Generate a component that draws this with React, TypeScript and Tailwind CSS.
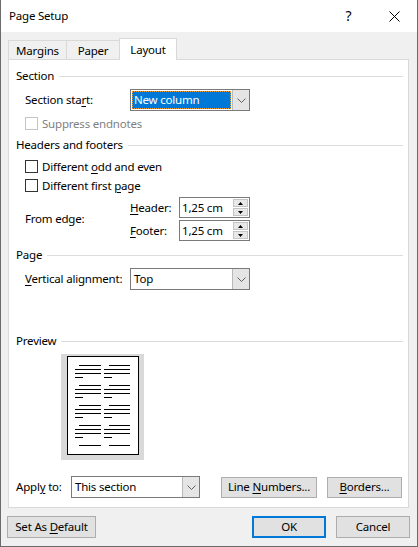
import React from "react"

function Key({ children }: { children: React.ReactNode }) {
  return <span className="underline decoration-1 underline-offset-[2px]">{children}</span>
}

function GroupHeader({ label, className = "" }: { label: string; className?: string }) {
  return (
    <div className={`flex h-[16px] items-center pl-[7px] pr-[5px] ${className}`}>
      <span className="whitespace-nowrap">{label}</span>
      <div className="ml-[5px] h-px flex-1 bg-[#dcdcdc]" />
    </div>
  )
}

function Chevron() {
  return (
    <svg width="9" height="5" viewBox="0 0 9 5">
      <path d="M0.5 0.5 L4.5 4.5 L8.5 0.5" fill="none" stroke="#606060" strokeWidth="1" />
    </svg>
  )
}

function Combo({
  value,
  className,
  selected = false,
}: {
  value: string
  className: string
  selected?: boolean
}) {
  return (
    <div className={`flex h-[22px] border border-[#7a7a7a] bg-white ${className}`}>
      {selected ? (
        <div className="flex-1 p-px">
          <div className="flex h-full items-center border border-dotted border-[#f0a040] bg-[#0078d7] pl-px text-white">
            {value}
          </div>
        </div>
      ) : (
        <div className="flex flex-1 items-center pl-[3px]">{value}</div>
      )}
      <div className="flex w-[17px] items-center justify-center border-l border-[#b9b9b9] bg-[#e5e5e5]">
        <Chevron />
      </div>
    </div>
  )
}

function Spinner({ value }: { value: string }) {
  return (
    <div className="flex h-[21px] w-[71px] border border-[#7a7a7a] bg-white">
      <div className="flex flex-1 items-center pl-[2px]">{value}</div>
      <div className="my-px mr-px flex w-[15px] flex-col gap-px">
        <div className="flex flex-1 items-center justify-center border border-[#c4c4c4] bg-[#e8e8e8]">
          <svg width="5" height="3" viewBox="0 0 5 3">
            <path d="M2.5 0 L5 3 L0 3 Z" fill="#000" />
          </svg>
        </div>
        <div className="flex flex-1 items-center justify-center border border-[#c4c4c4] bg-[#e8e8e8]">
          <svg width="5" height="3" viewBox="0 0 5 3">
            <path d="M0 0 L5 0 L2.5 3 Z" fill="#000" />
          </svg>
        </div>
      </div>
    </div>
  )
}

function Check({ children, disabled = false }: { children: React.ReactNode; disabled?: boolean }) {
  return (
    <div className="flex h-[13px] items-center pl-[16px]">
      <div
        className={`h-[13px] w-[13px] bg-white border ${disabled ? "border-[#c4c4c4]" : "border-[#333333]"}`}
      />
      <span className={`ml-[4px] whitespace-nowrap ${disabled ? "text-[#7f7f7f]" : ""}`}>{children}</span>
    </div>
  )
}

function Btn({
  children,
  className,
  primary = false,
}: {
  children: React.ReactNode
  className: string
  primary?: boolean
}) {
  return (
    <div
      className={`flex items-center justify-center bg-[#e1e1e1] ${
        primary ? "border-2 border-[#0078d7]" : "border border-[#adadad]"
      } ${className}`}
    >
      <span className="whitespace-nowrap">{children}</span>
    </div>
  )
}

function PreviewPage() {
  const groups = [9, 29, 49, 69]
  return (
    <svg width="72" height="99" viewBox="0 0 72 99" shapeRendering="crispEdges">
      <rect x="0.5" y="0.5" width="71" height="98" fill="#fff" stroke="#000" />
      {groups.map((y) => (
        <g key={y} fill="#000">
          <rect x="12" y={y} width="22" height="1" />
          <rect x="8" y={y + 4} width="26" height="1" />
          <rect x="8" y={y + 8} width="26" height="1" />
          <rect x="8" y={y + 12} width="8" height="1" />
          <rect x="42" y={y} width="21" height="1" />
          <rect x="37" y={y + 4} width="26" height="1" />
          <rect x="37" y={y + 8} width="26" height="1" />
          <rect x="37" y={y + 12} width="8" height="1" />
        </g>
      ))}
      <rect x="12" y="89" width="22" height="1" fill="#000" />
      <rect x="42" y="89" width="21" height="1" fill="#000" />
    </svg>
  )
}

export default function App() {
  return (
    <div className="flex h-[547px] w-[418px] flex-col border-x border-b border-[#6b6b6b] bg-[#f0f0f0] font-['Noto_Sans',sans-serif] text-[11.5px] leading-[16px] tracking-[-0.2px] text-black">
      <div className="flex h-[32px] items-center bg-white">
        <span className="pl-[8px]">Page Setup</span>
        <div className="ml-auto flex h-full">
          <div className="flex w-[45px] items-center justify-center text-[14px]">?</div>
          <div className="flex w-[46px] items-center justify-center">
            <svg width="11" height="11" viewBox="0 0 11 11">
              <path d="M0.5 0.5 L10.5 10.5 M10.5 0.5 L0.5 10.5" stroke="#000" strokeWidth="1" />
            </svg>
          </div>
        </div>
      </div>

      <div className="mt-[6px] flex h-[21px] items-end pl-[7px]">
        <div className="flex h-[19px] w-[58px] items-center justify-center border-l border-t border-[#d9d9d9] pt-[2px]">
          Margins
        </div>
        <div className="flex h-[19px] w-[53px] items-center justify-center border-l border-t border-[#d9d9d9] pt-[2px]">
          Paper
        </div>
        <div className="relative z-10 -mb-px flex h-[22px] w-[58px] items-center justify-center border-x border-t border-[#d9d9d9] bg-white">
          Layout
        </div>
      </div>

      <div className="ml-[7px] flex h-[449px] w-[401px] flex-col border border-[#d9d9d9] bg-white">
        <GroupHeader label="Section" className="mt-[8px]" />
        <div className="mt-[5px] flex items-center pl-[16px]">
          <span className="w-[105px] whitespace-nowrap">
            Section sta<Key>r</Key>t:
          </span>
          <Combo value="New column" className="w-[120px]" selected />
        </div>
        <div className="mt-[6px]">
          <Check disabled>Suppress endnotes</Check>
        </div>

        <GroupHeader label="Headers and footers" className="mt-[7px]" />
        <div className="mt-[7px]">
          <Check>
            Different <Key>o</Key>dd and even
          </Check>
        </div>
        <div className="mt-[6px]">
          <Check>
            Different first <Key>p</Key>age
          </Check>
        </div>
        <div className="mt-[5px] flex items-center pl-[16px]">
          <span className="w-[105px] whitespace-nowrap">From edge:</span>
          <div className="flex flex-col gap-[2px]">
            <div className="flex items-center">
              <span className="w-[49px]">
                <Key>H</Key>eader:
              </span>
              <Spinner value="1,25 cm" />
            </div>
            <div className="flex items-center">
              <span className="w-[49px]">
                <Key>F</Key>ooter:
              </span>
              <Spinner value="1,25 cm" />
            </div>
          </div>
        </div>

        <GroupHeader label="Page" className="mt-[6px]" />
        <div className="mt-[5px] flex items-center pl-[16px]">
          <span className="w-[105px] whitespace-nowrap">
            <Key>V</Key>ertical alignment:
          </span>
          <Combo value="Top" className="w-[120px]" />
        </div>

        <GroupHeader label="Preview" className="mt-[43px]" />
        <div className="mt-[5px] pl-[52px]">
          <div className="flex h-[106px] w-[83px] items-start bg-[#d9d9d9] pl-[6px] pt-[2px]">
            <PreviewPage />
          </div>
        </div>

        <div className="mt-[16px] flex items-center pl-[7px]">
          <span className="w-[55px] whitespace-nowrap">
            Appl<Key>y</Key> to:
          </span>
          <Combo value="This section" className="w-[129px]" />
          <Btn className="ml-[21px] h-[21px] w-[96px]">
            Line <Key>N</Key>umbers...
          </Btn>
          <Btn className="ml-[10px] h-[21px] w-[75px]">
            <Key>B</Key>orders...
          </Btn>
        </div>
      </div>

      <div className="mt-[8px] flex pl-[6px] pr-[7px]">
        <Btn className="h-[22px] w-[89px]">
          Set As <Key>D</Key>efault
        </Btn>
        <Btn className="ml-auto h-[22px] w-[74px]" primary>
          OK
        </Btn>
        <Btn className="ml-[10px] h-[22px] w-[74px]">Cancel</Btn>
      </div>
    </div>
  )
}
